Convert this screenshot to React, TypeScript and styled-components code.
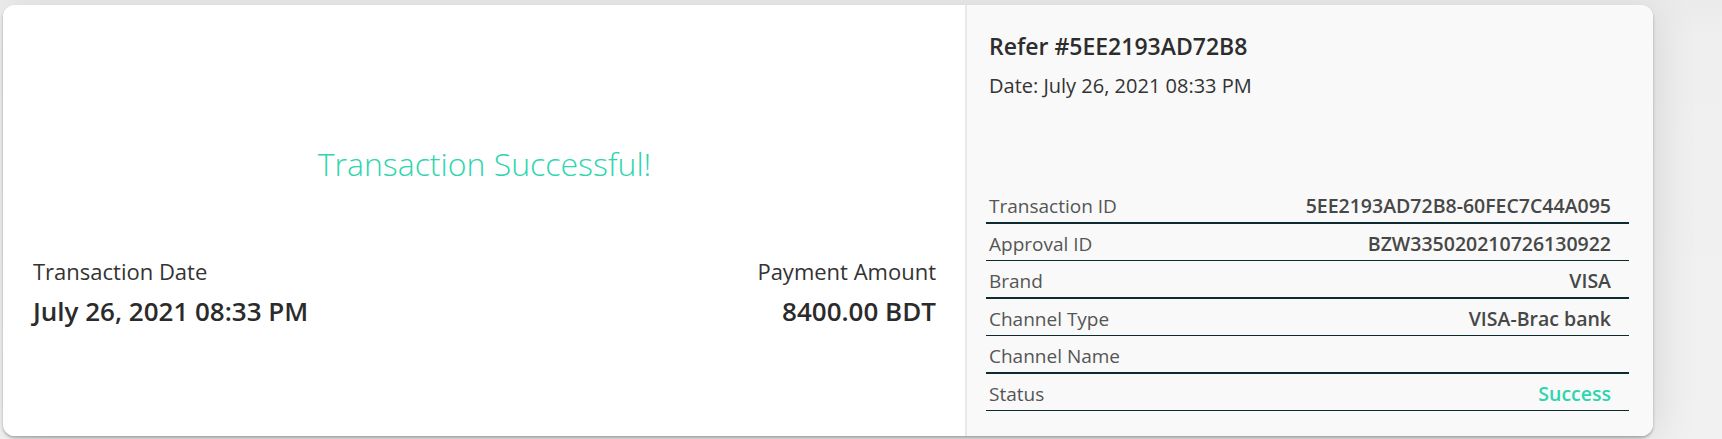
import React from "react";
import styled, { createGlobalStyle } from "styled-components";

const GlobalStyle = createGlobalStyle`
  html, body {
    margin: 0;
    padding: 0;
    background: #efefef;
  }
  body {
    font-family: "Open Sans", "Noto Sans", Arial, sans-serif;
    color: #2f2f2f;
  }
`;

const Page = styled.div`
  width: 1722px;
  height: 439px;
  padding: 5px 0 0 3px;
  box-sizing: border-box;
  background: linear-gradient(to bottom, #ebebeb 0px, #efefef 40px, #f1f1f1 100%);
  overflow: hidden;
`;

const Card = styled.div`
  width: 1650px;
  height: 431px;
  display: grid;
  grid-template-columns: 962px 1fr;
  border-radius: 12px;
  overflow: hidden;
  background: #fff;
  box-shadow: 0 2px 3px rgba(0, 0, 0, 0.28), 6px 4px 40px rgba(0, 0, 0, 0.1);
`;

const LeftPanel = styled.section`
  display: flex;
  flex-direction: column;
  padding: 0 29px 0 30px;
  background: #ffffff;
`;

const SuccessTitle = styled.h1`
  margin: 140px 0 0;
  text-align: center;
  font-size: 32px;
  line-height: 38px;
  font-weight: 300;
  color: #2ed5ae;
`;

const InfoRow = styled.div`
  display: flex;
  justify-content: space-between;
  margin-top: 74px;
`;

const InfoBlock = styled.div<{ $align?: "left" | "right" }>`
  display: flex;
  flex-direction: column;
  gap: 10px;
  text-align: ${(p) => p.$align ?? "left"};
`;

const InfoLabel = styled.span`
  font-size: 22px;
  line-height: 28px;
  color: #333;
`;

const InfoValue = styled.span`
  font-size: 26px;
  line-height: 32px;
  font-weight: 600;
  color: #2b2b2b;
`;

const RightPanel = styled.section`
  display: flex;
  flex-direction: column;
  padding: 27px 24px 0 19px;
  background: #f9f9f9;
  border-left: 2px solid #e8e8e8;
`;

const ReferTitle = styled.h2`
  margin: 0;
  padding-left: 3px;
  font-size: 23px;
  line-height: 28px;
  font-weight: 600;
  color: #2d2d2d;
`;

const DateLine = styled.p`
  margin: 13px 0 0;
  padding-left: 3px;
  font-size: 20px;
  line-height: 26px;
  color: #333;
`;

const DetailTable = styled.div`
  display: flex;
  flex-direction: column;
  margin-top: 87px;
`;

const DetailRow = styled.div<{ $thick?: boolean }>`
  display: flex;
  justify-content: space-between;
  align-items: flex-end;
  height: 32px;
  padding: 0 18px 4px 3px;
  box-sizing: content-box;
  border-bottom: ${(p) => (p.$thick ? "2px" : "1px")} solid #0c2a2f;
`;

const DetailLabel = styled.span`
  font-size: 19px;
  line-height: 24px;
  color: #555;
`;

const DetailValue = styled.span<{ $success?: boolean }>`
  font-size: 19.5px;
  line-height: 24px;
  font-weight: 600;
  color: ${(p) => (p.$success ? "#2ed5ae" : "#474747")};
`;

const rows: { label: string; value: string; success?: boolean }[] = [
  { label: "Transaction ID", value: "5EE2193AD72B8-60FEC7C44A095" },
  { label: "Approval ID", value: "BZW335020210726130922" },
  { label: "Brand", value: "VISA" },
  { label: "Channel Type", value: "VISA-Brac bank" },
  { label: "Channel Name", value: "" },
  { label: "Status", value: "Success", success: true },
];

export default function App() {
  return (
    <>
      <GlobalStyle />
      <Page>
        <Card>
          <LeftPanel>
            <SuccessTitle>Transaction Successful!</SuccessTitle>
            <InfoRow>
              <InfoBlock>
                <InfoLabel>Transaction Date</InfoLabel>
                <InfoValue>July 26, 2021 08:33 PM</InfoValue>
              </InfoBlock>
              <InfoBlock $align="right">
                <InfoLabel>Payment Amount</InfoLabel>
                <InfoValue>8400.00 BDT</InfoValue>
              </InfoBlock>
            </InfoRow>
          </LeftPanel>
          <RightPanel>
            <ReferTitle>Refer #5EE2193AD72B8</ReferTitle>
            <DateLine>Date: July 26, 2021 08:33 PM</DateLine>
            <DetailTable>
              {rows.map((r, i) => (
                <DetailRow key={r.label} $thick={i % 2 === 0}>
                  <DetailLabel>{r.label}</DetailLabel>
                  <DetailValue $success={r.success}>{r.value}</DetailValue>
                </DetailRow>
              ))}
            </DetailTable>
          </RightPanel>
        </Card>
      </Page>
    </>
  );
}
